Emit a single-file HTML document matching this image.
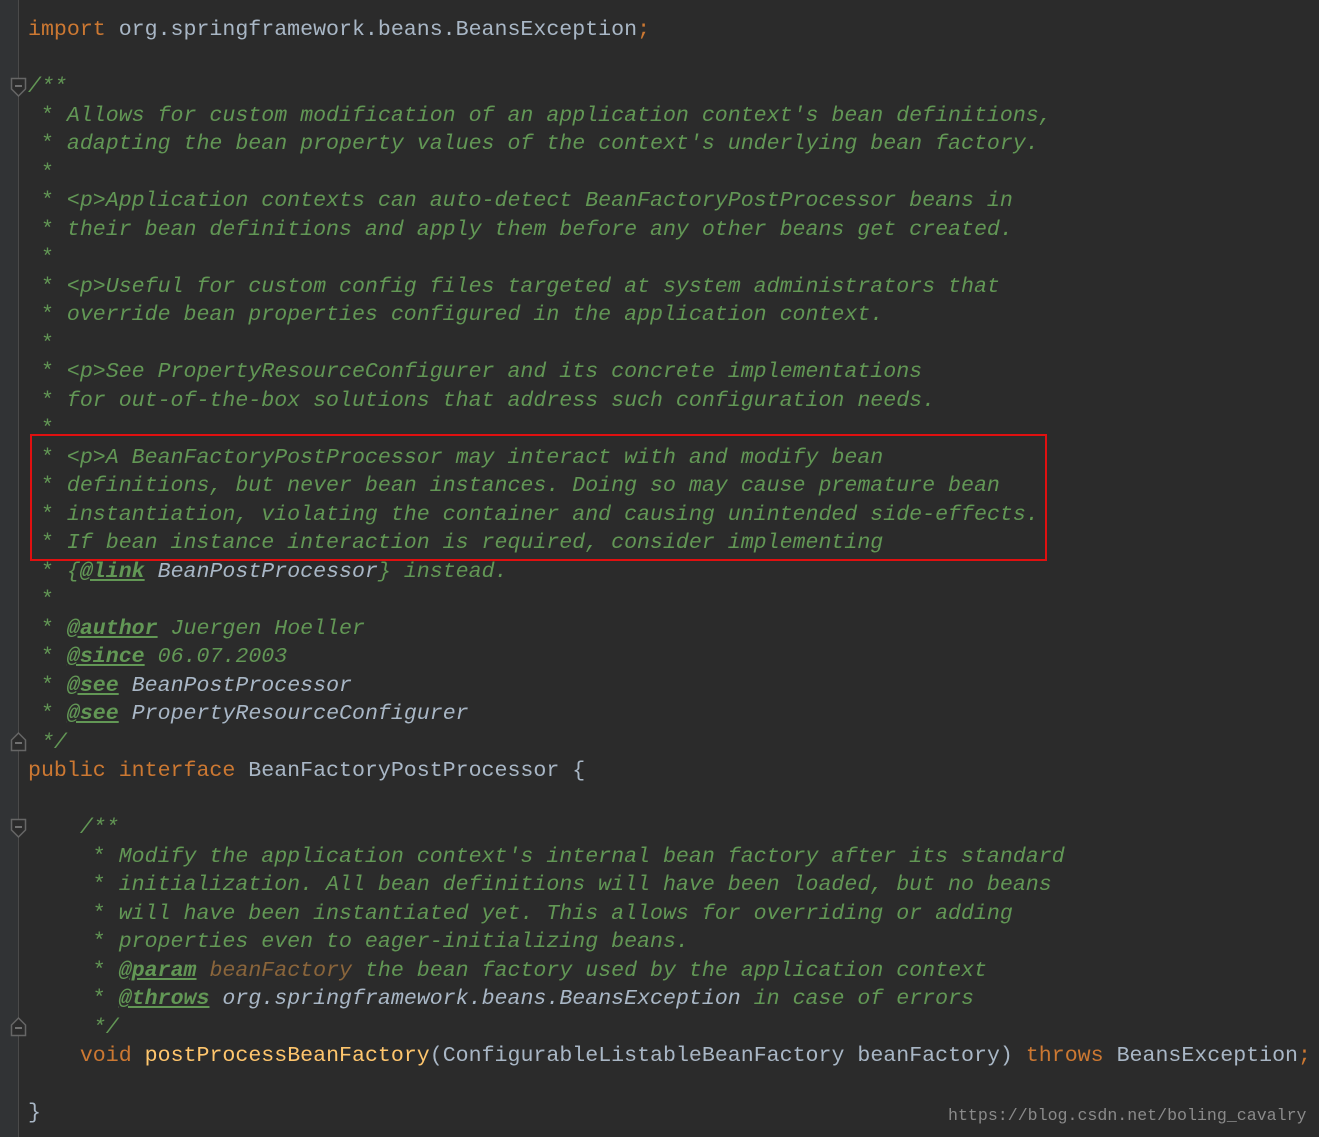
<!DOCTYPE html>
<html><head><meta charset="utf-8"><style>
html,body{margin:0;padding:0;}
body{width:1319px;height:1137px;background:#2b2b2b;position:relative;overflow:hidden;}
.gut{position:absolute;left:0;top:0;width:18px;height:1137px;background:#313335;border-right:1px solid #4a4a4a;}
pre{position:absolute;left:28px;top:16px;margin:0;font-family:"Liberation Mono",monospace;font-size:21.6px;line-height:28.5px;color:#a9b7c6;white-space:pre;}
.k{color:#cc7832}
.c{color:#629755;font-style:italic}
.s{color:#629755;font-style:normal}
.t{color:#629755;font-weight:bold;text-decoration:underline;font-style:italic}
.r{color:#a9b7c6;font-style:italic}
.p{color:#8a653b;font-style:italic}
.m{color:#ffc66d}
.box{position:absolute;left:30px;top:434px;width:1013px;height:123px;border:2px solid #e01010;}
.wm{position:absolute;left:948px;top:1106px;font-family:"Liberation Mono",monospace;font-size:16.6px;color:#8a8a8a;}
.f{position:absolute;left:10px;}
</style></head><body>
<div class="gut"></div>
<svg class="f" style="top:77px" width="18" height="22"><path d="M1.5 1.5H15.5V12L8.5 19L1.5 12Z" fill="#2b2b2b" stroke="#666" stroke-width="1.5"/><path d="M5 9H12" stroke="#888" stroke-width="1.5"/></svg>
<svg class="f" style="top:730px" width="18" height="22"><path d="M1.5 20.5H15.5V10L8.5 3L1.5 10Z" fill="#2b2b2b" stroke="#666" stroke-width="1.5"/><path d="M5 13H12" stroke="#888" stroke-width="1.5"/></svg>
<svg class="f" style="top:818px" width="18" height="22"><path d="M1.5 1.5H15.5V12L8.5 19L1.5 12Z" fill="#2b2b2b" stroke="#666" stroke-width="1.5"/><path d="M5 9H12" stroke="#888" stroke-width="1.5"/></svg>
<svg class="f" style="top:1015px" width="18" height="22"><path d="M1.5 20.5H15.5V10L8.5 3L1.5 10Z" fill="#2b2b2b" stroke="#666" stroke-width="1.5"/><path d="M5 13H12" stroke="#888" stroke-width="1.5"/></svg>
<pre><span class="k">import</span> org.springframework.beans.BeansException<span class="k">;</span>

<span class="c">/**
<span class="s"> *</span> Allows for custom modification of an application context's bean definitions,
<span class="s"> *</span> adapting the bean property values of the context's underlying bean factory.
<span class="s"> *</span>
<span class="s"> *</span> &lt;p&gt;Application contexts can auto-detect BeanFactoryPostProcessor beans in
<span class="s"> *</span> their bean definitions and apply them before any other beans get created.
<span class="s"> *</span>
<span class="s"> *</span> &lt;p&gt;Useful for custom config files targeted at system administrators that
<span class="s"> *</span> override bean properties configured in the application context.
<span class="s"> *</span>
<span class="s"> *</span> &lt;p&gt;See PropertyResourceConfigurer and its concrete implementations
<span class="s"> *</span> for out-of-the-box solutions that address such configuration needs.
<span class="s"> *</span>
<span class="s"> *</span> &lt;p&gt;A BeanFactoryPostProcessor may interact with and modify bean
<span class="s"> *</span> definitions, but never bean instances. Doing so may cause premature bean
<span class="s"> *</span> instantiation, violating the container and causing unintended side-effects.
<span class="s"> *</span> If bean instance interaction is required, consider implementing
<span class="s"> *</span> {<span class="t">@link</span> <span class="r">BeanPostProcessor</span>} instead.
<span class="s"> *</span>
<span class="s"> *</span> <span class="t">@author</span> Juergen Hoeller
<span class="s"> *</span> <span class="t">@since</span> 06.07.2003
<span class="s"> *</span> <span class="t">@see</span> <span class="r">BeanPostProcessor</span>
<span class="s"> *</span> <span class="t">@see</span> <span class="r">PropertyResourceConfigurer</span>
 */</span>
<span class="k">public interface</span> BeanFactoryPostProcessor {

    <span class="c">/**
<span class="s">     *</span> Modify the application context's internal bean factory after its standard
<span class="s">     *</span> initialization. All bean definitions will have been loaded, but no beans
<span class="s">     *</span> will have been instantiated yet. This allows for overriding or adding
<span class="s">     *</span> properties even to eager-initializing beans.
<span class="s">     *</span> <span class="t">@param</span> <span class="p">beanFactory</span> the bean factory used by the application context
<span class="s">     *</span> <span class="t">@throws</span> <span class="r">org.springframework.beans.BeansException</span> in case of errors
     */</span>
    <span class="k">void</span> <span class="m">postProcessBeanFactory</span>(ConfigurableListableBeanFactory beanFactory) <span class="k">throws</span> BeansException<span class="k">;</span>

}</pre>
<div class="box"></div>
<div class="wm">https://blog.csdn.net/boling_cavalry</div>
</body></html>
